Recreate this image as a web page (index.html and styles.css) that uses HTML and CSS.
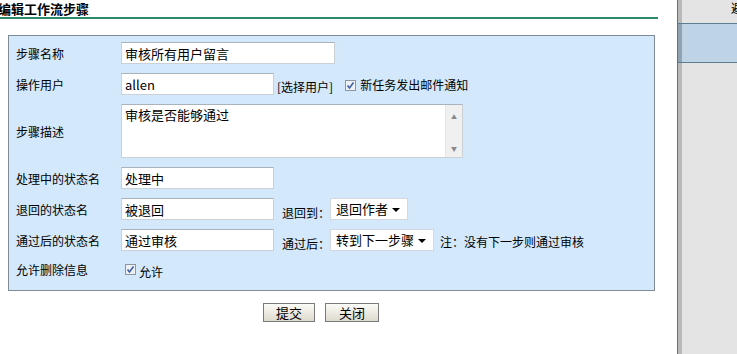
FILE: index.html
```html
<!DOCTYPE html>
<html lang="zh-CN">
<head>
  <meta charset="UTF-8" />
  <title>编辑工作流步骤</title>
  <link rel="stylesheet" href="styles.css">
</head>
<body>
  <div class="page">
    <div class="main">
      <h2 class="title">编辑工作流步骤</h2>

      <!-- Step form -->
      <form class="step-form">
        <label class="lbl">步骤名称</label>
        <div class="field"><input class="txt w-long" type="text" value="审核所有用户留言" /></div>

        <label class="lbl">操作用户</label>
        <div class="field">
          <input class="txt w-short" type="text" value="allen" />
          <span class="pick">[选择用户]</span>
          <span class="check"><svg width="11" height="11" viewBox="0 0 11 11"><rect x="0.5" y="0.5" width="10" height="10" fill="#eef0f3" stroke="#8a97a3"/><path d="M2.5 5.5 L4.5 8 L8.5 2.5" fill="none" stroke="#3c5fa8" stroke-width="1.6"/></svg></span>
          <span>新任务发出邮件通知</span>
        </div>

        <label class="lbl">步骤描述</label>
        <div class="field">
          <div class="area">
            <textarea>审核是否能够通过</textarea>
            <div class="sbar"><span>&#9650;</span><span>&#9660;</span></div>
          </div>
        </div>

        <label class="lbl">处理中的状态名</label>
        <div class="field"><input class="txt w-short" type="text" value="处理中" /></div>

        <label class="lbl">退回的状态名</label>
        <div class="field">
          <input class="txt w-short" type="text" value="被退回" />
          <span class="after">退回到：</span>
          <span class="sel w-back">退回作者</span>
        </div>

        <label class="lbl">通过后的状态名</label>
        <div class="field">
          <input class="txt w-short" type="text" value="通过审核" />
          <span class="after">通过后：</span>
          <span class="sel w-next">转到下一步骤</span>
          <span class="note">注：没有下一步则通过审核</span>
        </div>

        <label class="lbl">允许删除信息</label>
        <div class="field allow">
          <span class="check"><svg width="11" height="11" viewBox="0 0 11 11"><rect x="0.5" y="0.5" width="10" height="10" fill="#eef0f3" stroke="#8a97a3"/><path d="M2.5 5.5 L4.5 8 L8.5 2.5" fill="none" stroke="#3c5fa8" stroke-width="1.6"/></svg></span>
          <span>允许</span>
        </div>
      </form>

      <div class="actions">
        <button type="button">提交</button>
        <button type="button">关闭</button>
      </div>
    </div>

    <div class="side">
      <div class="side-top">避</div>
      <div class="side-band"></div>
    </div>
  </div>
</body>
</html>
```

FILE: styles.css
```css
body {
  margin: 0;
  font-family: "Noto Sans CJK SC", "Liberation Sans", sans-serif;
  font-size: 12px;
  color: #000;
  background: #fff;
}

.page {
  display: flex;
  height: 354px;
  overflow: hidden;
}

.main {
  width: 677px;
  flex-shrink: 0;
}

.title {
  margin: 0 19px 0 -2px;
  padding-top: 1px;
  height: 16px;
  font-size: 13px;
  line-height: 16px;
  font-weight: bold;
  border-bottom: 2px solid #2a8a6c;
}

.step-form {
  margin: 16px 0 0 8px;
  width: 647px;
  height: 256px;
  box-sizing: border-box;
  border: 1px solid #7f8b95;
  background: #d3e8fa;
  display: grid;
  grid-template-columns: 112px 1fr;
  grid-template-rows: 22px 22px 54px 22px 22px 22px 18px;
  row-gap: 9px;
  padding-top: 6px;
}

.lbl {
  padding-left: 7px;
  display: flex;
  align-items: center;
}

.field {
  display: flex;
  align-items: center;
  white-space: nowrap;
}

.txt {
  height: 22px;
  box-sizing: border-box;
  border: 1px solid #c9d0d6;
  border-top-color: #aab3bb;
  background: #fff;
  padding: 0 3px;
  font-family: inherit;
  font-size: 13px;
  color: #000;
  outline: none;
}

.w-long { width: 214px; }
.w-short { width: 153px; }

.pick {
  margin-left: 3px;
  margin-top: 4px;
}

.check {
  display: inline-flex;
  margin: 3px 4px 0 12px;
}

.area {
  display: flex;
  width: 342px;
  height: 54px;
  box-sizing: border-box;
  border: 1px solid #c9d0d6;
  border-top-color: #aab3bb;
  background: #fff;
}

.area textarea {
  flex: 1;
  border: 0;
  resize: none;
  outline: none;
  padding: 0 3px;
  font-family: inherit;
  font-size: 13px;
  overflow: hidden;
}

.sbar {
  width: 16px;
  background: #f0f0f0;
  border-left: 1px solid #e6e6e6;
  display: flex;
  flex-direction: column;
  justify-content: space-between;
  align-items: center;
  font-size: 6px;
  color: #888;
  padding: 7px 0 4px;
}

.after {
  margin-left: 8px;
  margin-top: 6px;
}

.sel {
  position: relative;
  height: 22px;
  box-sizing: border-box;
  border: 1px solid #d2d8dd;
  background: #fff;
  padding: 0 0 0 5px;
  font-size: 13px;
  line-height: 19px;
}

.sel::after {
  content: "";
  position: absolute;
  right: 7px;
  top: 9px;
  border-left: 4px solid transparent;
  border-right: 4px solid transparent;
  border-top: 4px solid #000;
}

.w-back { width: 78px; }
.w-next { width: 104px; }

.note {
  margin-left: 6px;
  margin-top: 3px;
}

.allow .check {
  margin: 0 3px 0 4px;
}

.allow span:last-child {
  margin-top: 4px;
}

.actions {
  display: flex;
  gap: 10px;
  padding: 12px 0 0 263px;
}

.actions button {
  width: 52px;
  height: 19px;
  padding: 0;
  border: 1px solid #7a7a7a;
  background: linear-gradient(#fbfbf8, #ddd9cd);
  font-family: inherit;
  font-size: 13px;
  line-height: 15px;
  color: #000;
}

.actions button + button {
  width: 54px;
}

.side {
  flex: 1;
  border-left: 1px solid #4f7b86;
  box-shadow: inset 4px 0 0 #b9b9b9;
  background: #e4e4e4;
}

.side-top {
  height: 23px;
  text-align: right;
  margin-right: -6px;
  font-size: 12px;
  line-height: 16px;
  box-sizing: border-box;
}

.side-band {
  height: 40px;
  box-sizing: border-box;
  border-top: 1px solid #5f7d92;
  border-bottom: 1px solid #5f7d92;
  background: linear-gradient(90deg, #8fa3b2 4px, #bfd3e6 4px);
}
```
